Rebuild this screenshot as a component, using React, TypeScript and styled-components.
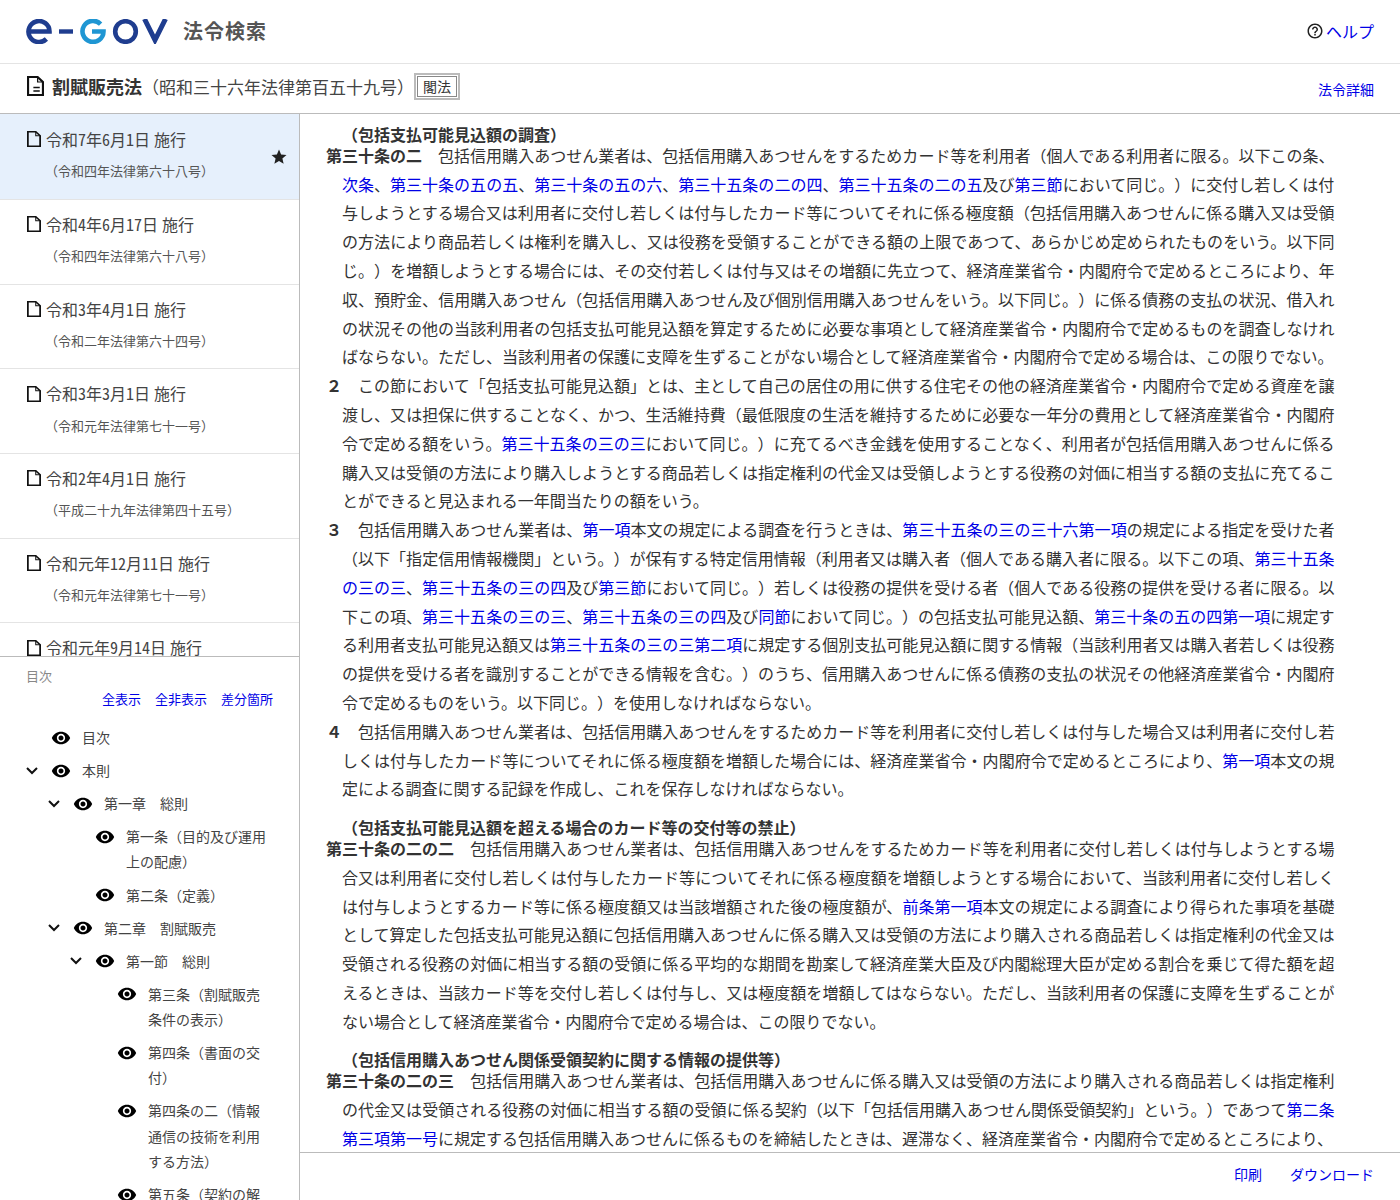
import React from "react";
import styled, { createGlobalStyle } from "styled-components";
import { MdVisibility, MdStar, MdHelpOutline } from "react-icons/md";

const Global = createGlobalStyle`
  html, body { margin: 0; padding: 0; background: #fff; }
  body {
    font-family: "Noto Sans CJK JP", "Noto Sans", sans-serif;
    color: #333;
    font-size: 16px;
    text-spacing-trim: space-all;
  }
  * { box-sizing: border-box; }
`;

const Page = styled.div`
  height: 1200px;
  display: flex;
  flex-direction: column;
  overflow: hidden;
`;
const Header = styled.header`
  height: 64px;
  flex: none;
  display: flex;
  align-items: center;
  justify-content: space-between;
  padding: 0 26px 1px;
  border-bottom: 1px solid #e4e4e4;
`;
const Brand = styled.div`
  display: flex;
  align-items: center;
  gap: 15px;
`;
const BrandName = styled.span`
  font-size: 20px;
  font-weight: 700;
  letter-spacing: 1px;
  color: #555;
  padding-bottom: 2px;
`;
const HelpLink = styled.a`
  display: flex;
  align-items: center;
  gap: 1.5px;
  color: #0000e6;
  font-size: 16px;
  svg { color: #222; }
`;
const TitleBar = styled.div`
  height: 50px;
  flex: none;
  display: flex;
  align-items: center;
  justify-content: space-between;
  padding: 0 26px 5px;
  border-bottom: 1px solid #bbb;
`;
const TitleMain = styled.div`
  display: flex;
  align-items: center;
  font-size: 18px;
  color: #444;
  svg { margin-right: 8px; margin-left: 1px; }
  strong { color: #333; }
`;
const TitleNote = styled.span`
  font-size: 17px;
`;
const LawTag = styled.span`
  width: 46px;
  height: 27px;
  border: 2px solid #bbb;
  box-shadow: inset 0 0 0 1px #fff, inset 0 0 0 2px #888;
  font-size: 14px;
  line-height: 23px;
  text-align: center;
  color: #333;
`;
const SmallLink = styled.a`
  color: #0000e6;
  font-size: 14px;
  padding-top: 6px;
`;
const Body = styled.div`
  flex: 1;
  min-height: 0;
  display: flex;
`;
const Side = styled.aside`
  width: 300px;
  flex: none;
  display: flex;
  flex-direction: column;
  border-right: 1px solid #bbb;
`;
const VersionList = styled.div`
  height: 543px;
  flex: none;
  overflow: hidden;
  border-bottom: 1px solid #bbb;
`;
const VersionItem = styled.div<{ $active?: boolean }>`
  height: ${(p) => (p.$active ? "85.9px" : "84.7px")};
  position: relative;
  padding: ${(p) => (p.$active ? "10.9px" : "10px")} 12px 0 27px;
  border-bottom: 1px solid #e4e4e4;
  background: ${(p) => (p.$active ? "#e6f0fc" : "#fff")};
`;
const VersionDate = styled.div`
  display: flex;
  align-items: center;
  gap: 5px;
  font-size: 16px;
  line-height: 28.8px;
  color: #444;
  font-feature-settings: "hwid";
  word-spacing: -4px;
`;
const VersionLaw = styled.div`
  padding-left: 18px;
  margin-top: 5.5px;
  font-size: 13px;
  line-height: 23.4px;
  color: #555;
`;
const StarMark = styled.span`
  position: absolute;
  right: 11px;
  top: 34px;
  display: flex;
  color: #222;
`;
const Toc = styled.nav`
  flex: 1;
  min-height: 0;
  overflow: hidden;
  padding: 10px 26px 0;
`;
const TocLabel = styled.div`
  font-size: 13px;
  line-height: 18px;
  color: #888;
`;
const TocActions = styled.div`
  display: flex;
  justify-content: flex-end;
  gap: 14px;
  margin-top: 2px;
  font-size: 13px;
  line-height: 23px;
  a { color: #0000e6; }
`;
const TocTree = styled.div`
  margin-top: 15px;
  margin-left: -1px;
`;
const TocRow = styled.div<{ $level: number }>`
  display: grid;
  grid-template-columns: 27px 30px 1fr;
  width: 246px;
  padding-left: ${(p) => p.$level * 22}px;
  margin-bottom: 7.9px;
  font-size: 14px;
  line-height: 25.2px;
  color: #444;
`;
const Slot = styled.span`
  display: flex;
  align-items: center;
  height: 25.2px;
  color: #000;
`;
const EyeSlot = styled(Slot)`
  margin-left: -1px;
`;
const Content = styled.main`
  flex: 1;
  min-width: 0;
  display: flex;
  flex-direction: column;
`;
const LawScroll = styled.div`
  flex: 1;
  min-height: 0;
  overflow: hidden;
  padding: 12.8px 65.5px 0 26px;
  border-bottom: 1px solid #bbb;
`;
const Article = styled.section`
  margin-bottom: 16.8px;
`;
const Caption = styled.div`
  padding-left: 16px;
  font-weight: 700;
  line-height: 15px;
  margin-bottom: -1px;
  color: #333;
`;
const Para = styled.p`
  margin: 0;
  padding-left: 16px;
  text-indent: -16px;
  line-height: 28.8px;
  text-align: justify;
  color: #333;
  a { color: #0000e6; }
  strong { font-weight: 700; }
`;
const Footer = styled.footer`
  height: 47px;
  flex: none;
  display: flex;
  justify-content: flex-end;
  align-items: center;
  gap: 28px;
  padding: 0 26px 6px;
  font-size: 14px;
  a { color: #0000e6; }
`;

const Logo = () => (
  <svg width="142" height="25" viewBox="0 0 142 25" fill="none" aria-label="e-Gov">
    <path d="M2.5 12.5H23.5A10.5 10.5 0 1 0 20.4 20" stroke="#1f3d8f" strokeWidth="4.6" />
    <path d="M33 12.5h14" stroke="#1f3d8f" strokeWidth="4.4" />
    <path d="M74.6 5.1A10.5 10.5 0 1 0 77.5 12.5H66" stroke="#1f96d3" strokeWidth="4.6" />
    <circle cx="99.5" cy="12.5" r="10.3" stroke="#1f3d8f" strokeWidth="4.6" />
    <path d="M118.5 0L129 21L139.5 0" stroke="#1f3d8f" strokeWidth="5" />
  </svg>
);

const DocIcon = ({ lines, width, height }: { lines?: boolean; width: number; height: number }) => (
  <svg width={width} height={height} viewBox="0 0 16 20" preserveAspectRatio="none" fill="none" stroke="#111" strokeWidth="2">
    <path d="M1 1h9l5 5v13H1z" />
    <path d="M10 1v5h5" strokeWidth="1.2" />
    {lines && <path d="M6 11.5h6M6 15h6" strokeWidth="1.5" />}
  </svg>
);

const Chevron = () => (
  <svg width="14" height="10" viewBox="0 0 14 10" fill="none" stroke="#111" strokeWidth="2">
    <path d="M2 2l5 5 5-5" />
  </svg>
);

const Rich = ({ text }: { text: string }) => (
  <>
    {text.split(/(\[[^\]]+\])/).map((part, i) =>
      part.startsWith("[") ? <a key={i}>{part.slice(1, -1)}</a> : <React.Fragment key={i}>{part}</React.Fragment>
    )}
  </>
);

const versions = [
  ["令和7年6月1日 施行", "（令和四年法律第六十八号）"],
  ["令和4年6月17日 施行", "（令和四年法律第六十八号）"],
  ["令和3年4月1日 施行", "（令和二年法律第六十四号）"],
  ["令和3年3月1日 施行", "（令和元年法律第七十一号）"],
  ["令和2年4月1日 施行", "（平成二十九年法律第四十五号）"],
  ["令和元年12月11日 施行", "（令和元年法律第七十一号）"],
  ["令和元年9月14日 施行", "（令和元年法律第七十一号）"],
];

const toc: [number, boolean, string][] = [
  [0, false, "目次"],
  [0, true, "本則"],
  [1, true, "第一章　総則"],
  [2, false, "第一条（目的及び運用上の配慮）"],
  [2, false, "第二条（定義）"],
  [1, true, "第二章　割賦販売"],
  [2, true, "第一節　総則"],
  [3, false, "第三条（割賦販売条件の表示）"],
  [3, false, "第四条（書面の交付）"],
  [3, false, "第四条の二（情報通信の技術を利用する方法）"],
  [3, false, "第五条（契約の解除等の制限）"],
];

const articles: { caption: string; paras: [string, string][] }[] = [
  {
    caption: "（包括支払可能見込額の調査）",
    paras: [
      ["第三十条の二", "包括信用購入あつせん業者は、包括信用購入あつせんをするためカード等を利用者（個人である利用者に限る。以下この条、[次条]、[第三十条の五の五]、[第三十条の五の六]、[第三十五条の二の四]、[第三十五条の二の五]及び[第三節]において同じ。）に交付し若しくは付与しようとする場合又は利用者に交付し若しくは付与したカード等についてそれに係る極度額（包括信用購入あつせんに係る購入又は受領の方法により商品若しくは権利を購入し、又は役務を受領することができる額の上限であつて、あらかじめ定められたものをいう。以下同じ。）を増額しようとする場合には、その交付若しくは付与又はその増額に先立つて、経済産業省令・内閣府令で定めるところにより、年収、預貯金、信用購入あつせん（包括信用購入あつせん及び個別信用購入あつせんをいう。以下同じ。）に係る債務の支払の状況、借入れの状況その他の当該利用者の包括支払可能見込額を算定するために必要な事項として経済産業省令・内閣府令で定めるものを調査しなければならない。ただし、当該利用者の保護に支障を生ずることがない場合として経済産業省令・内閣府令で定める場合は、この限りでない。"],
      ["２", "この節において「包括支払可能見込額」とは、主として自己の居住の用に供する住宅その他の経済産業省令・内閣府令で定める資産を譲渡し、又は担保に供することなく、かつ、生活維持費（最低限度の生活を維持するために必要な一年分の費用として経済産業省令・内閣府令で定める額をいう。[第三十五条の三の三]において同じ。）に充てるべき金銭を使用することなく、利用者が包括信用購入あつせんに係る購入又は受領の方法により購入しようとする商品若しくは指定権利の代金又は受領しようとする役務の対価に相当する額の支払に充てることができると見込まれる一年間当たりの額をいう。"],
      ["３", "包括信用購入あつせん業者は、[第一項]本文の規定による調査を行うときは、[第三十五条の三の三十六第一項]の規定による指定を受けた者（以下「指定信用情報機関」という。）が保有する特定信用情報（利用者又は購入者（個人である購入者に限る。以下この項、[第三十五条の三の三]、[第三十五条の三の四]及び[第三節]において同じ。）若しくは役務の提供を受ける者（個人である役務の提供を受ける者に限る。以下この項、[第三十五条の三の三]、[第三十五条の三の四]及び[同節]において同じ。）の包括支払可能見込額、[第三十条の五の四第一項]に規定する利用者支払可能見込額又は[第三十五条の三の三第二項]に規定する個別支払可能見込額に関する情報（当該利用者又は購入者若しくは役務の提供を受ける者を識別することができる情報を含む。）のうち、信用購入あつせんに係る債務の支払の状況その他経済産業省令・内閣府令で定めるものをいう。以下同じ。）を使用しなければならない。"],
      ["４", "包括信用購入あつせん業者は、包括信用購入あつせんをするためカード等を利用者に交付し若しくは付与した場合又は利用者に交付し若しくは付与したカード等についてそれに係る極度額を増額した場合には、経済産業省令・内閣府令で定めるところにより、[第一項]本文の規定による調査に関する記録を作成し、これを保存しなければならない。"],
    ],
  },
  {
    caption: "（包括支払可能見込額を超える場合のカード等の交付等の禁止）",
    paras: [
      ["第三十条の二の二", "包括信用購入あつせん業者は、包括信用購入あつせんをするためカード等を利用者に交付し若しくは付与しようとする場合又は利用者に交付し若しくは付与したカード等についてそれに係る極度額を増額しようとする場合において、当該利用者に交付し若しくは付与しようとするカード等に係る極度額又は当該増額された後の極度額が、[前条第一項]本文の規定による調査により得られた事項を基礎として算定した包括支払可能見込額に包括信用購入あつせんに係る購入又は受領の方法により購入される商品若しくは指定権利の代金又は受領される役務の対価に相当する額の受領に係る平均的な期間を勘案して経済産業大臣及び内閣総理大臣が定める割合を乗じて得た額を超えるときは、当該カード等を交付し若しくは付与し、又は極度額を増額してはならない。ただし、当該利用者の保護に支障を生ずることがない場合として経済産業省令・内閣府令で定める場合は、この限りでない。"],
    ],
  },
  {
    caption: "（包括信用購入あつせん関係受領契約に関する情報の提供等）",
    paras: [
      ["第三十条の二の三", "包括信用購入あつせん業者は、包括信用購入あつせんに係る購入又は受領の方法により購入される商品若しくは指定権利の代金又は受領される役務の対価に相当する額の受領に係る契約（以下「包括信用購入あつせん関係受領契約」という。）であつて[第二条第三項第一号]に規定する包括信用購入あつせんに係るものを締結したときは、遅滞なく、経済産業省令・内閣府令で定めるところにより、"],
    ],
  },
];

export default function App() {
  return (
    <Page>
      <Global />
      <Header>
        <Brand>
          <Logo />
          <BrandName>法令検索</BrandName>
        </Brand>
        <HelpLink>
          <MdHelpOutline size={18} />
          ヘルプ
        </HelpLink>
      </Header>
      <TitleBar>
        <TitleMain>
          <DocIcon lines width={17} height={20} />
          <strong>割賦販売法</strong>
          <TitleNote>（昭和三十六年法律第百五十九号）</TitleNote>
          <LawTag>閣法</LawTag>
        </TitleMain>
        <SmallLink>法令詳細</SmallLink>
      </TitleBar>
      <Body>
        <Side>
          <VersionList>
            {versions.map(([date, law], i) => (
              <VersionItem key={date} $active={i === 0}>
                <VersionDate>
                  <DocIcon width={14} height={16} />
                  <span>{date}</span>
                </VersionDate>
                <VersionLaw>{law}</VersionLaw>
                {i === 0 && (
                  <StarMark>
                    <MdStar size={18} />
                  </StarMark>
                )}
              </VersionItem>
            ))}
          </VersionList>
          <Toc>
            <TocLabel>目次</TocLabel>
            <TocActions>
              <a>全表示</a>
              <a>全非表示</a>
              <a>差分箇所</a>
            </TocActions>
            <TocTree>
              {toc.map(([level, open, label]) => (
                <TocRow key={label} $level={level}>
                  <Slot>{open && <Chevron />}</Slot>
                  <EyeSlot>
                    <MdVisibility size={20} />
                  </EyeSlot>
                  <span>{label}</span>
                </TocRow>
              ))}
            </TocTree>
          </Toc>
        </Side>
        <Content>
          <LawScroll>
            {articles.map((a) => (
              <Article key={a.caption}>
                <Caption>{a.caption}</Caption>
                {a.paras.map(([num, text]) => (
                  <Para key={num}>
                    <strong>{num}</strong>　<Rich text={text} />
                  </Para>
                ))}
              </Article>
            ))}
          </LawScroll>
          <Footer>
            <a>印刷</a>
            <a>ダウンロード</a>
          </Footer>
        </Content>
      </Body>
    </Page>
  );
}
